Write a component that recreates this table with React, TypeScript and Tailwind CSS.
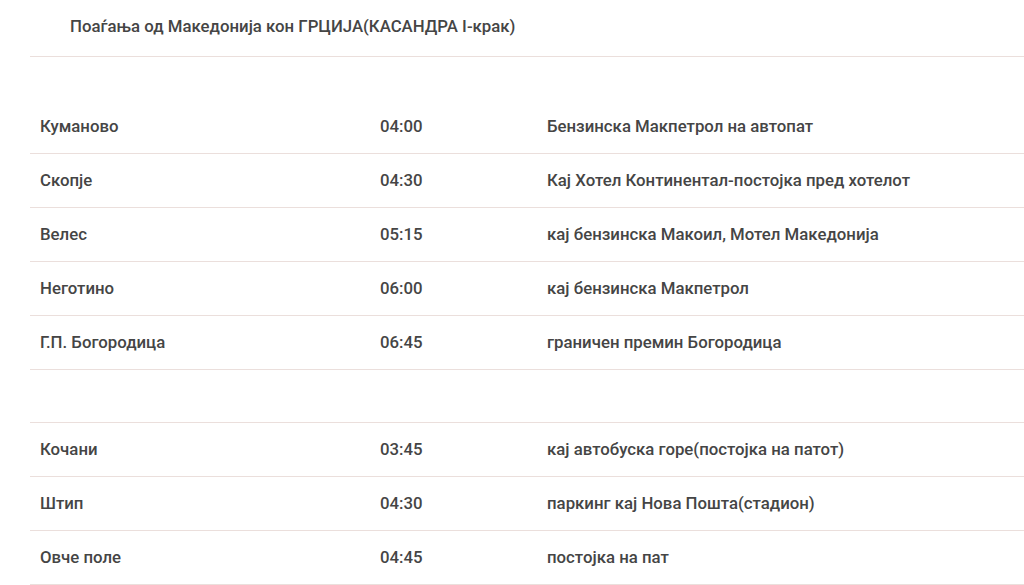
import React from "react";

const group1 = [
  ["Куманово", "04:00", "Бензинска Макпетрол на автопат"],
  ["Скопје", "04:30", "Кај Хотел Континентал-постојка пред хотелот"],
  ["Велес", "05:15", "кај бензинска Макоил, Мотел Македонија"],
  ["Неготино", "06:00", "кај бензинска Макпетрол"],
  ["Г.П. Богородица", "06:45", "граничен премин Богородица"],
];
const group2 = [
  ["Кочани", "03:45", "кај автобуска горе(постојка на патот)"],
  ["Штип", "04:30", "паркинг кај Нова Пошта(стадион)"],
  ["Овче поле", "04:45", "постојка на пат"],
];

function Row({ r }: { r: string[] }) {
  return (
    <div className="flex items-center h-[54px] border-b border-[#ebdfdc] pt-[1px]">
      <div className="w-[340px] pl-[10px]">{r[0]}</div>
      <div className="w-[167px] pl-[10px]">{r[1]}</div>
      <div className="flex-1 pl-[10px]">{r[2]}</div>
    </div>
  );
}

export default function App() {
  return (
    <div
      className="w-[1024px] h-[585px] overflow-hidden bg-white text-[#454545] text-[16.8px] font-medium"
      style={{ fontFamily: "Roboto, 'Noto Sans', sans-serif" }}
    >
      <div className="ml-[30px]">
        <div className="h-[57px] border-b border-[#ebdfdc] flex items-center pl-[40px] pb-[2px]">
          Поаѓања од Македонија кон ГРЦИЈА(КАСАНДРА I-крак)
        </div>
        <div className="h-[43px]" />
        {group1.map((r) => (
          <Row key={r[0]} r={r} />
        ))}
        <div className="h-[53px] border-b border-[#ebdfdc]" />
        {group2.map((r) => (
          <Row key={r[0]} r={r} />
        ))}
      </div>
    </div>
  );
}
